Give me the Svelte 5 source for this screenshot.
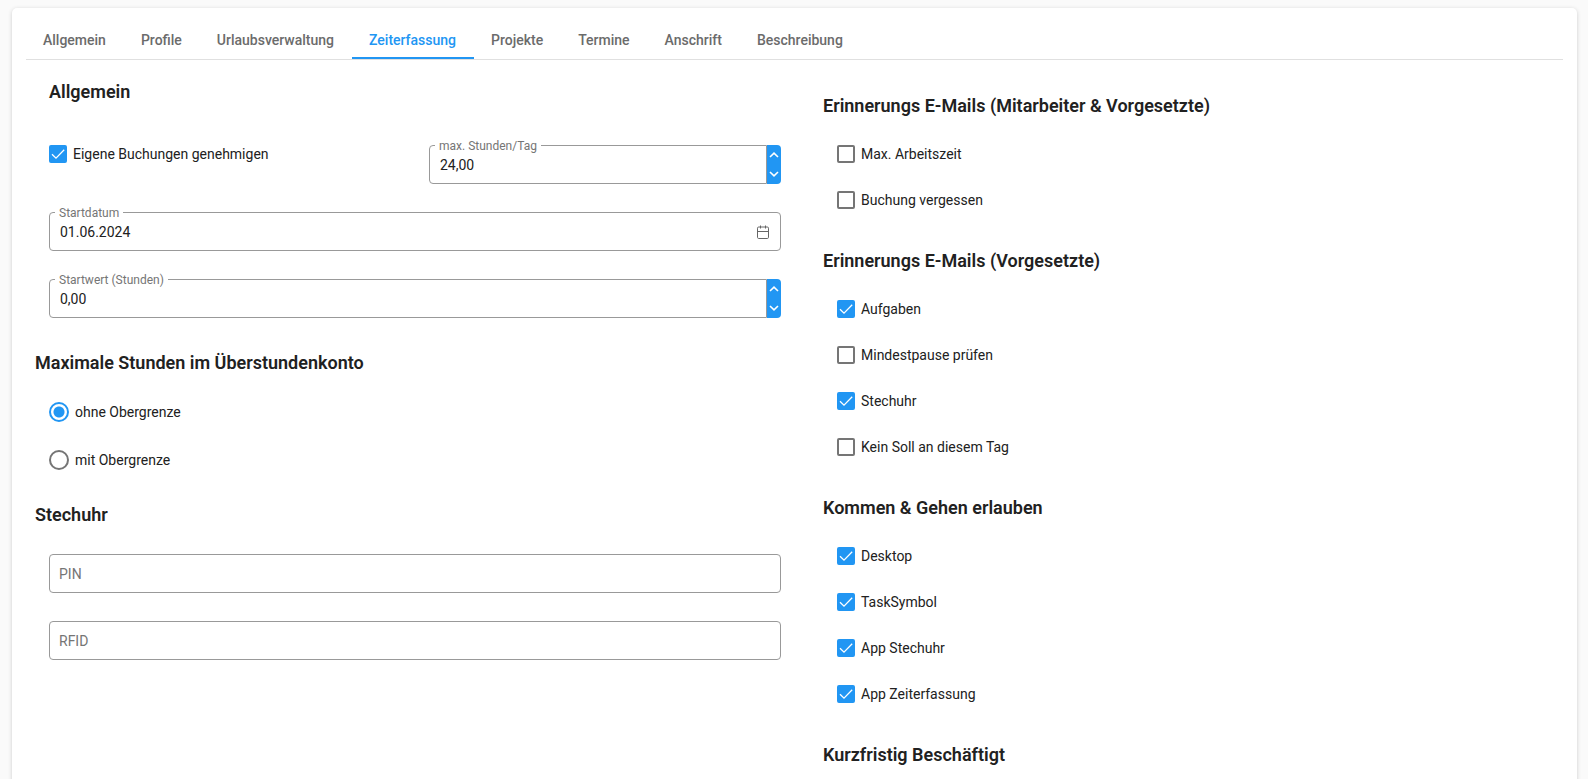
<script lang="ts">
  const tabs = ['Allgemein', 'Profile', 'Urlaubsverwaltung', 'Zeiterfassung', 'Projekte', 'Termine', 'Anschrift', 'Beschreibung'];
  let activeTab = $state('Zeiterfassung');

  let approveOwn = $state(true);
  let maxHours = $state('24,00');
  let startDate = $state('01.06.2024');
  let startValue = $state('0,00');
  let limit = $state('ohne');
  let pin = $state('');
  let rfid = $state('');

  let groups = $state([
    {
      title: 'Erinnerungs E-Mails (Mitarbeiter & Vorgesetzte)',
      options: [
        { label: 'Max. Arbeitszeit', checked: false },
        { label: 'Buchung vergessen', checked: false }
      ]
    },
    {
      title: 'Erinnerungs E-Mails (Vorgesetzte)',
      options: [
        { label: 'Aufgaben', checked: true },
        { label: 'Mindestpause prüfen', checked: false },
        { label: 'Stechuhr', checked: true },
        { label: 'Kein Soll an diesem Tag', checked: false }
      ]
    },
    {
      title: 'Kommen & Gehen erlauben',
      options: [
        { label: 'Desktop', checked: true },
        { label: 'TaskSymbol', checked: true },
        { label: 'App Stechuhr', checked: true },
        { label: 'App Zeiterfassung', checked: true }
      ]
    },
    { title: 'Kurzfristig Beschäftigt', options: [] }
  ]);

  function step(value: string, delta: number) {
    const n = parseFloat(value.replace(',', '.')) || 0;
    return Math.max(0, n + delta).toFixed(2).replace('.', ',');
  }
</script>

{#snippet tick()}
  <svg class="tick" viewBox="0 0 18 18" aria-hidden="true">
    <path d="M3 9.3 L7 13.2 L15.2 4.8" fill="none" stroke="#fff" stroke-width="1.3" />
  </svg>
{/snippet}

{#snippet spin(up: () => void, down: () => void)}
  <div class="spin">
    <button type="button" aria-label="Erhöhen" onclick={up}>
      <svg viewBox="0 0 10 6" aria-hidden="true"><path d="M1 5 L5 1.2 L9 5" /></svg>
    </button>
    <button type="button" aria-label="Verringern" onclick={down}>
      <svg viewBox="0 0 10 6" aria-hidden="true"><path d="M1 1 L5 4.8 L9 1" /></svg>
    </button>
  </div>
{/snippet}

<div class="page">
  <main class="card">
    <div class="tabs" role="tablist">
      {#each tabs as tab}
        <button
          type="button"
          role="tab"
          class="tab"
          class:active={tab === activeTab}
          aria-selected={tab === activeTab}
          onclick={() => (activeTab = tab)}>{tab}</button>
      {/each}
    </div>

    <div class="columns">
      <div class="col col--left">
        <section class="general">
          <h2>Allgemein</h2>
          <div class="fields">
            <div class="pair">
              <label class="check">
                <span class="box"><input type="checkbox" bind:checked={approveOwn} />{@render tick()}</span>
                Eigene Buchungen genehmigen
              </label>
              <div class="field field--spin">
                <input id="max-hours" type="text" bind:value={maxHours} />
                <label for="max-hours">max. Stunden/Tag</label>
                {@render spin(() => (maxHours = step(maxHours, 1)), () => (maxHours = step(maxHours, -1)))}
              </div>
            </div>
            <div class="field">
              <input id="start-date" type="text" bind:value={startDate} />
              <label for="start-date">Startdatum</label>
              <button type="button" class="calendar" aria-label="Kalender öffnen">
                <svg viewBox="0 0 14 14" aria-hidden="true">
                  <rect x="1.5" y="2" width="11" height="11.5" rx="1.2" />
                  <path d="M1.5 6.5 H12.5 M4.5 0.5 V3.5 M9.5 0.5 V3.5" />
                </svg>
              </button>
            </div>
            <div class="field field--spin">
              <input id="start-value" type="text" bind:value={startValue} />
              <label for="start-value">Startwert (Stunden)</label>
              {@render spin(() => (startValue = step(startValue, 1)), () => (startValue = step(startValue, -1)))}
            </div>
          </div>
        </section>

        <section class="limit">
          <h2>Maximale Stunden im Überstundenkonto</h2>
          <div class="radios">
            <label class="radio">
              <input type="radio" name="limit" value="ohne" bind:group={limit} />
              ohne Obergrenze
            </label>
            <label class="radio">
              <input type="radio" name="limit" value="mit" bind:group={limit} />
              mit Obergrenze
            </label>
          </div>
        </section>

        <section class="clock">
          <h2>Stechuhr</h2>
          <div class="fields">
            <div class="field" class:empty={!pin}>
              <input id="pin" type="text" bind:value={pin} />
              <label for="pin">PIN</label>
            </div>
            <div class="field" class:empty={!rfid}>
              <input id="rfid" type="text" bind:value={rfid} />
              <label for="rfid">RFID</label>
            </div>
          </div>
        </section>
      </div>

      <div class="col col--right">
        {#each groups as group}
          <section class="group">
            <h2>{group.title}</h2>
            {#each group.options as option}
              <label class="check">
                <span class="box"><input type="checkbox" bind:checked={option.checked} />{@render tick()}</span>
                {option.label}
              </label>
            {/each}
          </section>
        {/each}
      </div>
    </div>
  </main>
</div>

<style>
  :global(body) {
    margin: 0;
    background: #fafafa;
  }

  .page {
    --accent: #2196f3;
    --text: #212121;
    --muted: #757575;
    --line: #999;
    box-sizing: border-box;
    display: flex;
    min-height: 100vh;
    padding: 8px 11px 0 12px;
    color: var(--text);
    font: 14px/20px Roboto, "Noto Sans", sans-serif;
  }

  button,
  input {
    margin: 0;
    font: inherit;
  }

  .card {
    flex: 1;
    min-width: 0;
    padding: 14px 14px 0;
    background: #fff;
    border-radius: 5px 5px 0 0;
    box-shadow: 0 1px 4px rgba(0, 0, 0, 0.18);
  }

  .tabs {
    display: flex;
    border-bottom: 1px solid #e0e0e0;
  }

  .tab {
    height: 37px;
    padding: 0 18px 0 17px;
    border: 0;
    border-bottom: 2px solid transparent;
    background: none;
    color: #6b6b6b;
    font-weight: 500;
    cursor: pointer;
  }

  .tab.active {
    border-bottom-color: var(--accent);
    color: var(--accent);
  }

  .columns {
    display: flex;
    padding: 0 8px 0 9px;
  }

  .col {
    min-width: 0;
  }

  .col--left {
    flex: 0 0 50%;
    padding-top: 20px;
  }

  .col--right {
    flex: 1;
    padding: 34px 0 0 28px;
  }

  h2 {
    margin: 0;
    font-size: 18px;
    font-weight: 600;
    line-height: 24px;
  }

  .fields {
    display: flex;
    flex-direction: column;
    gap: 28px;
    padding: 0 14px;
  }

  .general h2 {
    padding-left: 14px;
    margin-bottom: 41px;
  }

  .limit {
    margin-top: 33px;
  }

  .radios {
    padding: 13px 14px 0;
  }

  .clock {
    margin-top: 19px;
  }

  .clock h2 {
    margin-bottom: 27px;
  }

  .pair {
    display: grid;
    grid-template-columns: 1fr 1fr;
    gap: 28px;
    align-items: start;
  }

  .check,
  .radio {
    display: flex;
    align-items: center;
    gap: 6px;
  }

  .radio {
    height: 48px;
  }

  .pair .check {
    height: 18px;
  }

  .group {
    margin-bottom: 26px;
  }

  .group h2 {
    margin-bottom: 13px;
  }

  .group .check {
    height: 46px;
    padding-left: 14px;
  }

  .box {
    position: relative;
    width: 18px;
    height: 18px;
  }

  .box input {
    display: block;
    appearance: none;
    width: 18px;
    height: 18px;
    border: 2px solid var(--muted);
    border-radius: 2px;
    background: #fff;
  }

  .box input:checked {
    border-color: var(--accent);
    background: var(--accent);
  }

  /* drawn over the box, hidden again while unchecked */
  .tick {
    position: absolute;
    inset: 0;
    pointer-events: none;
  }

  .box input:not(:checked) + .tick {
    display: none;
  }

  .radio input {
    appearance: none;
    width: 20px;
    height: 20px;
    border: 2px solid var(--muted);
    border-radius: 50%;
  }

  .radio input:checked {
    border-color: var(--accent);
    background: radial-gradient(circle, var(--accent) 5px, #fff 6px);
  }

  .field {
    position: relative;
    display: flex;
  }

  .field input {
    flex: 1;
    box-sizing: border-box;
    min-width: 0;
    height: 39px;
    padding: 0 10px;
    border: 1px solid var(--line);
    border-radius: 4px;
    outline: 0;
    background: #fff;
    color: var(--text);
  }

  .field input:focus {
    border-color: var(--accent);
  }

  .field--spin input {
    border-radius: 4px 0 0 4px;
  }

  /* floating label, cuts a notch into the border */
  .field label {
    position: absolute;
    top: -6px;
    left: 6px;
    padding: 0 4px;
    background: #fff;
    color: var(--muted);
    font-size: 12px;
    line-height: 14px;
  }

  .field.empty label {
    top: 10px;
    font-size: 14px;
    line-height: 20px;
  }

  .spin {
    display: flex;
    flex-direction: column;
    width: 14px;
    border-radius: 0 4px 4px 0;
    background: var(--accent);
    overflow: hidden;
  }

  .spin button {
    display: flex;
    flex: 1;
    align-items: center;
    justify-content: center;
    padding: 0;
    border: 0;
    background: none;
  }

  .spin svg {
    width: 10px;
    height: 6px;
    fill: none;
    stroke: #fff;
    stroke-width: 1.6;
  }

  .calendar {
    position: absolute;
    top: 10px;
    right: 9px;
    display: flex;
    align-items: center;
    justify-content: center;
    width: 18px;
    height: 20px;
    padding: 0;
    border: 0;
    background: none;
  }

  .calendar svg {
    width: 14px;
    height: 14px;
    fill: none;
    stroke: #666;
  }
</style>
